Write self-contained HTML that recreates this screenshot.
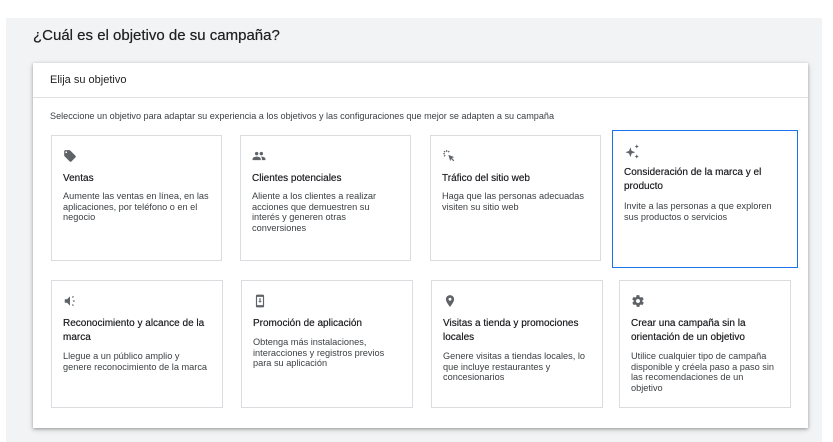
<!DOCTYPE html>
<html><head><meta charset="utf-8"><style>
*{margin:0;padding:0;box-sizing:border-box}
body{width:833px;height:442px;background:#fff;font-family:"Liberation Sans",Arial,sans-serif;position:relative;overflow:hidden;color:#202124}
.bg{position:absolute;left:6px;top:18px;width:816px;height:424px;background:#f1f3f4}
h1{position:absolute;left:33px;top:27px;font-size:15px;font-weight:normal;color:#202124;text-shadow:0 0 .4px #202124}
.card{position:absolute;left:33px;top:63px;width:775px;height:365px;background:#fff;box-shadow:0 1px 3px rgba(0,0,0,.3),0 2px 6px rgba(0,0,0,.12)}
.hd{position:absolute;left:17px;top:11px;font-size:11px;color:#202124}
.div{position:absolute;left:0;top:34px;width:100%;height:1px;background:#e0e0e0}
.sub{position:absolute;left:17px;top:48px;font-size:9.1px;color:#3c4043}
.o{position:absolute;border:1px solid #dadce0;background:#fff;padding:0 11px}
.o.sel{border:1.5px solid #1a73e8}
.o svg{position:absolute;left:11px;top:13px}
.t{position:absolute;left:11px;right:8px;font-size:10px;line-height:14px;color:#202124;text-shadow:0 0 .4px #202124}
.d{position:absolute;left:11px;right:12px;font-size:9.2px;line-height:10.7px;color:#3c4043}
</style></head><body>
<div class="bg"></div>
<h1>¿Cuál es el objetivo de su campaña?</h1>
<div class="card">
<div class="hd">Elija su objetivo</div>
<div class="div"></div>
<div class="sub">Seleccione un objetivo para adaptar su experiencia a los objetivos y las configuraciones que mejor se adapten a su campaña</div>

<div class="o" style="left:18px;top:72px;width:171px;height:126px">
<svg width="14" height="14" viewBox="0 0 24 24"><path fill="#5f6368" d="M21.4 11.6l-9-9C12 2.2 11.6 2 11 2H4c-1.1 0-2 .9-2 2v7c0 .6.2 1.1.6 1.4l9 9c.4.4.9.6 1.4.6s1.1-.2 1.4-.6l7-7c.4-.4.6-.9.6-1.4s-.2-1.1-.6-1.4zM5.5 7C4.7 7 4 6.3 4 5.5S4.7 4 5.5 4 7 4.7 7 5.5 6.3 7 5.5 7z"/></svg>
<div class="t" style="top:36px">Ventas</div>
<div class="d" style="top:55px">Aumente las ventas en línea, en las aplicaciones, por teléfono o en el negocio</div></div>

<div class="o" style="left:207px;top:72px;width:171px;height:126px">
<svg width="14" height="14" viewBox="0 0 24 24"><path fill="#5f6368" d="M16 11c1.7 0 3-1.3 3-3s-1.3-3-3-3-3 1.3-3 3 1.3 3 3 3zm-8 0c1.7 0 3-1.3 3-3S9.7 5 8 5 5 6.3 5 8s1.3 3 3 3zm0 2c-2.3 0-7 1.2-7 3.5V19h14v-2.5c0-2.3-4.7-3.5-7-3.5zm8 0c-.3 0-.6 0-1 .1 1.2.8 2 2 2 3.4V19h6v-2.5c0-2.3-4.7-3.5-7-3.5z"/></svg>
<div class="t" style="top:36px">Clientes potenciales</div>
<div class="d" style="top:55px">Aliente a los clientes a realizar<br>acciones que demuestren su<br>interés y generen otras<br>conversiones</div></div>

<div class="o" style="left:397px;top:72px;width:171px;height:126px">
<svg width="14" height="14" viewBox="0 0 24 24"><path fill="#5f6368" d="M11 10l10 4-4 1.5 4 4-1.5 1.5-4-4L14 21z"/><path stroke="#5f6368" stroke-width="2" d="M8 2v3M2 8h3M3.5 3.5l2 2M3.5 12.5l2-2M12.5 3.5l-2 2"/></svg>
<div class="t" style="top:36px">Tráfico del sitio web</div>
<div class="d" style="top:55px">Haga que las personas adecuadas visiten su sitio web</div></div>

<div class="o sel" style="left:579px;top:67px;width:186px;height:138px">
<svg width="17" height="17" viewBox="0 0 24 24" style="top:12px"><path fill="#5f6368" d="M9 6l1.8 5.2L16 13l-5.2 1.8L9 20l-1.8-5.2L2 13l5.2-1.8zM18 2l.9 2.1L21 5l-2.1.9L18 8l-.9-2.1L15 5l2.1-.9zM18 16l.9 2.1 2.1.9-2.1.9L18 22l-.9-2.1L15 19l2.1-.9z"/></svg>
<div class="t" style="top:35px">Consideración de la marca y el producto</div>
<div class="d" style="top:70px">Invite a las personas a que exploren sus productos o servicios</div></div>

<div class="o" style="left:18px;top:217px;width:172px;height:128px">
<svg width="14" height="14" viewBox="0 0 24 24"><path fill="#5f6368" d="M3 9v6h4l5 5V4L7 9z"/><path stroke="#5f6368" stroke-width="2" d="M16 6l2-2M16 18l2 2M17 12h3"/></svg>
<div class="t" style="top:36px">Reconocimiento y alcance de la marca</div>
<div class="d" style="top:70px">Llegue a un público amplio y<br>genere reconocimiento de la marca</div></div>

<div class="o" style="left:208px;top:217px;width:172px;height:128px">
<svg width="14" height="14" viewBox="0 0 24 24"><path fill="#5f6368" d="M17 1H7C5.9 1 5 1.9 5 3v18c0 1.1.9 2 2 2h10c1.1 0 2-.9 2-2V3c0-1.1-.9-2-2-2zm0 18H7V5h10zM11 7h2v5h2l-3 3-3-3h2z"/></svg>
<div class="t" style="top:36px">Promoción de aplicación</div>
<div class="d" style="top:56px">Obtenga más instalaciones, interacciones y registros previos para su aplicación</div></div>

<div class="o" style="left:398px;top:217px;width:172px;height:128px">
<svg width="14" height="14" viewBox="0 0 24 24"><path fill="#5f6368" d="M12 2C8.1 2 5 5.1 5 9c0 5.2 7 13 7 13s7-7.8 7-13c0-3.9-3.1-7-7-7zm0 9.5c-1.4 0-2.5-1.1-2.5-2.5S10.6 6.5 12 6.5s2.5 1.1 2.5 2.5-1.1 2.5-2.5 2.5z"/></svg>
<div class="t" style="top:36px">Visitas a tienda y promociones locales</div>
<div class="d" style="top:70px">Genere visitas a tiendas locales, lo<br>que incluye restaurantes y<br>concesionarios</div></div>

<div class="o" style="left:586px;top:217px;width:172px;height:128px">
<svg width="14" height="14" viewBox="0 0 24 24"><path fill="#5f6368" d="M19.4 13c0-.3.1-.6.1-1s0-.7-.1-1l2.1-1.6c.2-.2.2-.4.1-.6l-2-3.5c-.1-.2-.4-.3-.6-.2l-2.5 1c-.5-.4-1.1-.7-1.7-1l-.4-2.6c0-.3-.2-.5-.5-.5h-4c-.3 0-.5.2-.5.4l-.4 2.7c-.6.2-1.1.6-1.7 1l-2.5-1c-.2-.1-.5 0-.6.2l-2 3.5c-.1.2-.1.5.1.6L4.6 11c0 .3-.1.7-.1 1s0 .7.1 1l-2.1 1.6c-.2.2-.2.4-.1.6l2 3.5c.1.2.4.3.6.2l2.5-1c.5.4 1.1.7 1.7 1l.4 2.6c0 .3.2.5.5.5h4c.3 0 .5-.2.5-.4l.4-2.7c.6-.2 1.2-.6 1.7-1l2.5 1c.2.1.5 0 .6-.2l2-3.5c.1-.2.1-.5-.1-.6zM12 15.5c-1.9 0-3.5-1.6-3.5-3.5s1.6-3.5 3.5-3.5 3.5 1.6 3.5 3.5-1.6 3.5-3.5 3.5z"/></svg>
<div class="t" style="top:36px">Crear una campaña sin la orientación de un objetivo</div>
<div class="d" style="top:70px">Utilice cualquier tipo de campaña<br>disponible y créela paso a paso sin<br>las recomendaciones de un<br>objetivo</div></div>
</div>
</body></html>
